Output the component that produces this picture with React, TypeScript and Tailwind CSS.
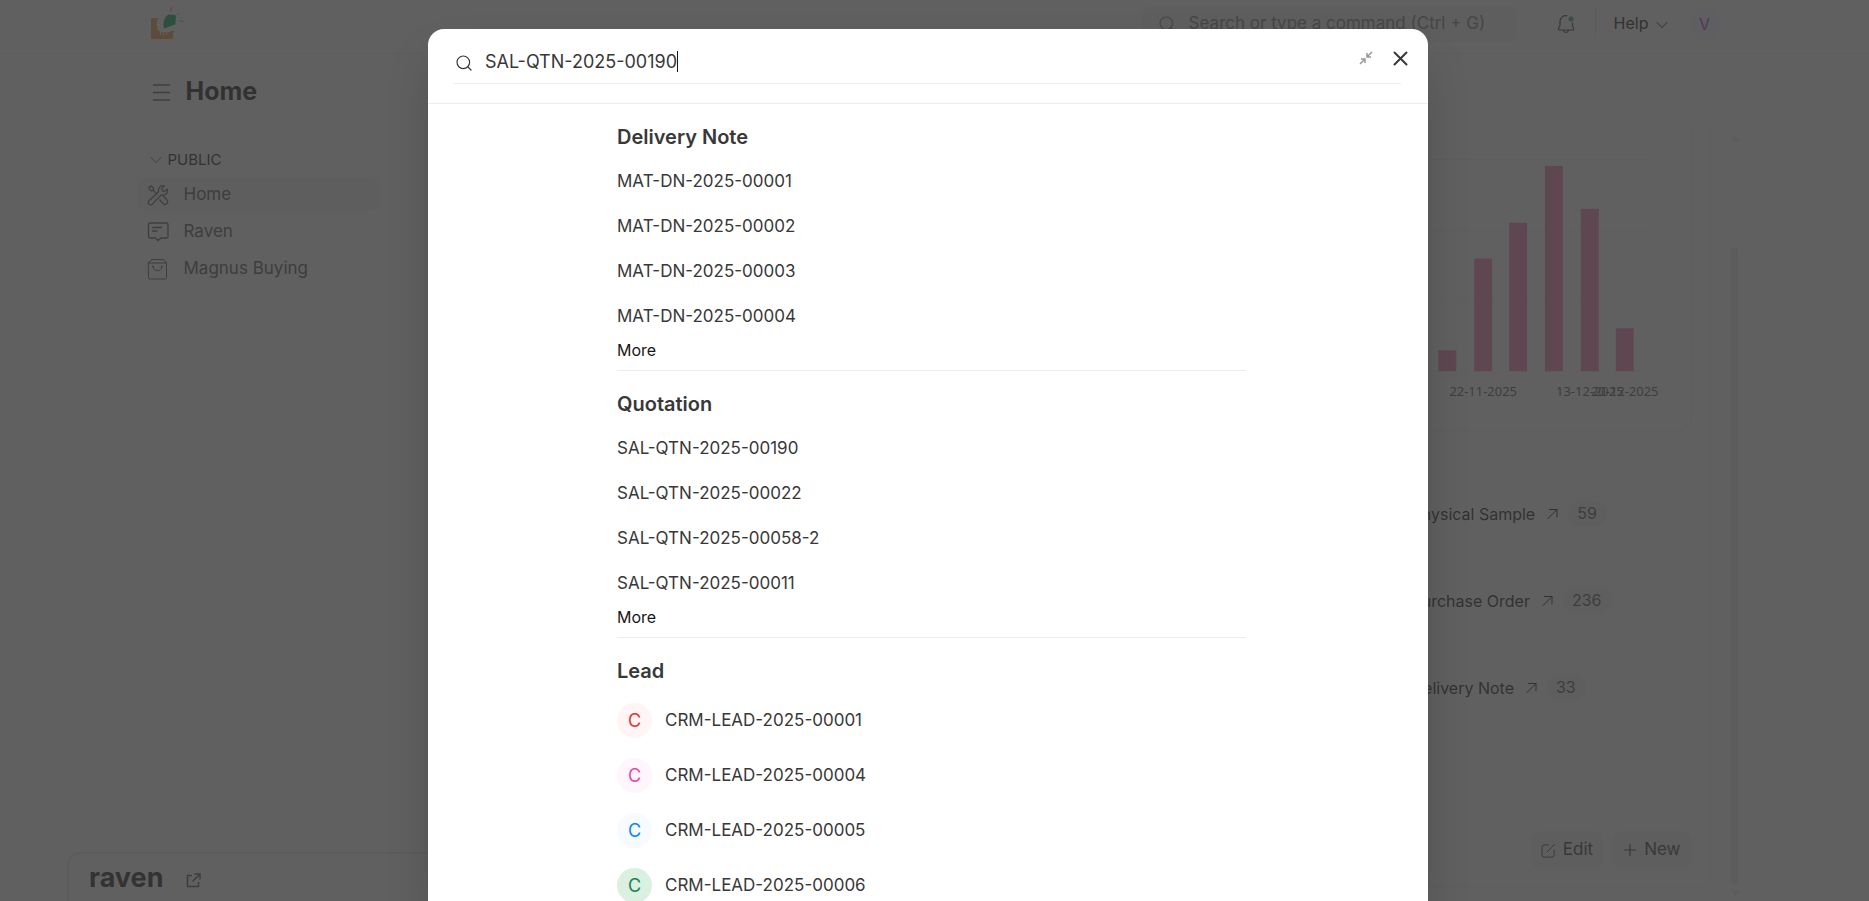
import type { ReactNode } from "react"

// === Sample Data ===
const sidebarItems = [
  { label: "Home", icon: "tool", active: true },
  { label: "Raven", icon: "message", active: false },
  { label: "Magnus Buying", icon: "bag", active: false },
]

const chartBars = [
  { x: 36, height: 21 },
  { x: 72, height: 113 },
  { x: 107, height: 149 },
  { x: 143, height: 206 },
  { x: 179, height: 163 },
  { x: 214, height: 43 },
]

const chartLabels = [
  { x: 72, text: "22-11-2025" },
  { x: 179, text: "13-12-2025" },
  { x: 214, text: "20-12-2025" },
]

const shortcuts = [
  { label: "Physical Sample", count: 59 },
  { label: "Purchase Order", count: 236 },
  { label: "Delivery Note", count: 33 },
]

const resultGroups = [
  {
    title: "Delivery Note",
    items: ["MAT-DN-2025-00001", "MAT-DN-2025-00002", "MAT-DN-2025-00003", "MAT-DN-2025-00004"],
  },
  {
    title: "Quotation",
    items: ["SAL-QTN-2025-00190", "SAL-QTN-2025-00022", "SAL-QTN-2025-00058-2", "SAL-QTN-2025-00011"],
  },
]

const leads = [
  { name: "CRM-LEAD-2025-00001", color: "bg-[#fff5f5] text-[#e03636]" },
  { name: "CRM-LEAD-2025-00004", color: "bg-[#fff5fc] text-[#e34aa6]" },
  { name: "CRM-LEAD-2025-00005", color: "bg-[#f7fbff] text-[#0289f7]" },
  { name: "CRM-LEAD-2025-00006", color: "bg-[#daf0e1] text-[#1f8053]" },
]

// === Icons ===
function Icon({ className, size = 16, children }: { className?: string; size?: number; children: ReactNode }) {
  return (
    <svg
      className={className}
      viewBox={`0 0 ${size} ${size}`}
      fill="none"
      stroke="currentColor"
      strokeLinecap="round"
      strokeLinejoin="round"
      aria-hidden="true"
    >
      {children}
    </svg>
  )
}

function SearchIcon({ className }: { className?: string }) {
  return (
    <Icon className={className}>
      <circle cx="7.3" cy="7.3" r="6.3" strokeWidth="1.2" />
      <path d="M11.8 11.8 15 15" strokeWidth="1.2" />
    </Icon>
  )
}

function ChevronIcon({ className }: { className?: string }) {
  return (
    <Icon className={className} size={12}>
      <path d="M1 3.5 6 8.5l5-5" />
    </Icon>
  )
}

function SidebarIcon({ name }: { name: string }) {
  if (name === "tool") {
    return (
      <Icon className="size-[22px]" size={22}>
        <path d="M1.8 3.8 4 2l2.200 1.600.3 2.200-1.200 1-2-.4ZM6 6.200l3.600 3.600" strokeWidth="1.2" />
        <path
          d="M11.600 7.800 2 16.800a2.300 2.300 0 0 0 3.300 3.300l8.900-9.300c2.700.7 5.300-.5 6.200-2.900.3-1 .2-2-.1-2.900l-2.700 2.500-2.300-.6-.5-2.300 2.500-2.700c-3.300-1-6.600 1.900-5.700 5.900Z"
          strokeWidth="1.2"
        />
        <path d="m16.200 12 3.700 3.900c2.200 2.600-1.200 6-3.600 3.900L12.800 16" strokeWidth="1.2" />
      </Icon>
    )
  }
  if (name === "message") {
    return (
      <Icon className="size-[22px]" size={22}>
        <path d="M3 2h16.500A1.500 1.500 0 0 1 21 3.500v12a1.500 1.500 0 0 1-1.500 1.500H14l-2.800 2.600L8.400 17H3a1.500 1.500 0 0 1-1.500-1.500v-12A1.500 1.500 0 0 1 3 2Z" strokeWidth="1.3" />
        <path d="M5.500 6.500h9M5.500 10H10" strokeWidth="1.3" />
      </Icon>
    )
  }
  return (
    <Icon className="size-[22px]" size={22}>
      <path d="M1.500 4.500 5 1.500h11l3.500 3v15a1.500 1.500 0 0 1-1.500 1.500H3a1.500 1.500 0 0 1-1.500-1.500ZM1.500 5h18" />
      <path d="M6 8.500c.4 5.800 8.600 5.800 9 0" />
      <circle cx="6" cy="8.500" r=".5" />
      <circle cx="15" cy="8.500" r=".5" />
    </Icon>
  )
}

function Logo() {
  return (
    <svg className="h-[34px] w-9" viewBox="0 0 36 34" aria-hidden="true">
      <path
        d="M1 12h8c-3 3-3 8-1 12l2 2v3h1v-3h2v4h1v-4h2v3h1v-3h2l2-1h4l-2 2v6H1Z"
        fill="#f0964b"
      />
      <path d="M18 8.500 25 9l1 1-.7 8.500L14 22.500c-1.500-5-.2-10.500 4-14Z" fill="#00a862" />
      <path d="m20 6 .4-4.500L21.900 1l-.6 4.500ZM26.500 8.200 29.800 7l-.3 1-2.500 1ZM28.500 15c2-1 4-.700 6 .6-2 .7-4 .7-6-.6Z" fill="#f0964b" />
    </svg>
  )
}

function ShortcutArrow() {
  return (
    <Icon className="size-3" size={12}>
      <path d="M2 10.500 11 1.500M3.500 1.500H11V9" />
    </Icon>
  )
}

// === Desk behind the dialog ===
function Navbar() {
  return (
    <header className="border-b border-[#ededed]">
      <div className="mx-auto flex h-[53px] w-full max-w-[1600px] items-start pl-[15px] pr-[14px]">
        <a href="#home" aria-label="Home" className="mt-[6px]">
          <Logo />
        </a>
        <div className="ml-auto mt-[6px] flex h-9 w-[375px] items-center gap-[14px] rounded-[10px] bg-[#f3f3f3] pl-[17px]">
          <SearchIcon className="size-4 shrink-0 text-[#7c7c7c]" />
          <input
            aria-label="Search"
            placeholder="Search or type a command (Ctrl + G)"
            className="w-full bg-transparent text-[17px] text-[#7c7c7c] placeholder:text-[#7c7c7c] outline-none"
          />
        </div>
        <button aria-label="Notifications" className="ml-[38px] mt-[13px]">
          <svg className="size-[22px] text-[#383838]" viewBox="0 0 22 22" fill="none" stroke="currentColor" strokeWidth="1.200" aria-hidden="true">
            <path d="M12.500 2.800C8 1.800 5 4.700 5 8.500v4L3.500 15.500a1 1 0 0 0 1 1.500h13a1 1 0 0 0 1-1.500L17.500 12.500V9.500M8.500 17.500c.5 2.600 4.500 2.600 5 0" />
            <circle cx="16" cy="6" r="2.500" fill="#30a66d" stroke="none" />
          </svg>
        </button>
        <span className="ml-[18px] mt-2 h-[30px] w-px bg-[#e2e2e2]" />
        <button className="ml-[18px] mt-[11px] flex items-center gap-[7px] text-base text-[#171717]">
          Help
          <ChevronIcon className="mt-1 size-3" />
        </button>
        <button className="ml-[21px] mt-2 size-8 rounded-full bg-[#faf5ff] text-base text-[#9c45e3]">V</button>
      </div>
    </header>
  )
}

function Sidebar() {
  return (
    <aside className="w-[243px] shrink-0 pt-4">
      <button className="flex h-7 items-center gap-[6px] pl-[13px] text-[15px] text-[#171717]">
        <ChevronIcon className="size-3 text-[#525252]" />
        PUBLIC
      </button>
      <nav className="mt-1 flex flex-col gap-1">
        {sidebarItems.map((item) => (
          <a
            key={item.label}
            href="#workspace"
            className={`flex h-[33px] items-center gap-[15px] rounded-[10px] pl-[10px] text-[17px] text-[#525252] ${
              item.active ? "bg-[#f3f3f3]" : ""
            }`}
          >
            <SidebarIcon name={item.icon} />
            {item.label}
          </a>
        ))}
      </nav>
    </aside>
  )
}

function Chart() {
  return (
    <div className="flex h-[301px] justify-end rounded-b-[14px] border-x border-b border-[#ededed] pr-[30px]">
      <svg className="h-full w-[250px]" viewBox="0 0 250 301" aria-label="Weekly orders">
        {[29, 100, 171, 242].map((y) => (
          <path key={y} d={`M0 ${y}.5H240`} stroke="#f0f0f0" />
        ))}
        {chartBars.map((bar) => (
          <g key={bar.x}>
            <rect x={bar.x - 9} y={242 - bar.height} width="18" height={bar.height} fill="#f683ae" />
            <path d={`M${bar.x}.5 242v7`} stroke="#f0f0f0" />
          </g>
        ))}
        {chartLabels.map((label) => (
          <text
            key={label.text}
            x={label.x}
            y="267"
            textAnchor="middle"
            className="fill-[#525252] font-['Noto_Sans',sans-serif] text-[13px]"
          >
            {label.text}
          </text>
        ))}
      </svg>
    </div>
  )
}

function Workspace() {
  return (
    <main className="mb-[14px] ml-[37px] flex min-w-0 flex-1 flex-col rounded-b-[14px] border-x border-b border-[#ededed] px-[18px] pb-[17px]">
      <Chart />
      <ul className="ml-auto mt-[39px] w-[280px]">
        {shortcuts.map((item) => (
          <li key={item.label} className="flex h-[87px] items-center">
            <a href="#list" className="flex items-center gap-[11px] text-base text-[#171717]">
              {item.label}
              <ShortcutArrow />
            </a>
            <span className="ml-[9px] rounded-full bg-[#f3f3f3] px-[10px] text-base leading-[25px] text-[#525252]">
              {item.count}
            </span>
          </li>
        ))}
      </ul>
      <div className="mt-auto flex justify-end gap-[9px] text-[17px] text-[#383838]">
        <button className="flex h-[38px] items-center gap-[7px] rounded-[10px] bg-[#f3f3f3] px-[10px]">
          <Icon className="size-[15px]">
            <path d="M8 2H3.500A2.500 2.500 0 0 0 1 4.500v8A2.500 2.500 0 0 0 3.500 15h8a2.500 2.500 0 0 0 2.500-2.500V8M6.500 9.500 14.500 1.500" />
          </Icon>
          Edit
        </button>
        <button className="flex h-[38px] items-center gap-[7px] rounded-[10px] bg-[#f3f3f3] px-[11px]">
          <Icon className="size-[14px]" size={14}>
            <path d="M7 1.500v11M1.500 7h11" strokeWidth="1.200" />
          </Icon>
          New
        </button>
      </div>
    </main>
  )
}

function ScrollTrack() {
  return (
    <div className="-mr-1 ml-5 flex w-2 flex-col items-center pb-1 pt-1" aria-hidden="true">
      <svg className="w-2" viewBox="0 0 8 7">
        <path d="M4 0 8 7H0Z" fill="#ebebeb" />
      </svg>
      <span className="mb-[6px] mt-[106px] w-[7px] flex-1 rounded-full bg-[#ebebeb]" />
      <svg className="w-2" viewBox="0 0 8 7">
        <path d="M4 7 8 0H0Z" fill="#ebebeb" />
      </svg>
    </div>
  )
}

function RavenBar() {
  return (
    <div className="absolute bottom-0 left-[67px] flex h-[49px] w-2/3 items-center rounded-t-[14px] border-2 border-b-0 border-[#e8e8e8] bg-white pl-5">
      <span className="text-[27px] leading-8 font-bold text-[#202020]">raven</span>
      <a href="#raven" aria-label="Open Raven" className="ml-[23px] mt-[6px] text-[#525252]">
        <svg className="size-[15px]" viewBox="0 0 15 15" fill="none" stroke="currentColor" strokeWidth="1.500" aria-hidden="true">
          <path d="M6 2.500H1.500v11h11V9M8.500 1H14v5.500M14 1 6.500 8.500" />
        </svg>
      </a>
    </div>
  )
}

// === Search dialog ===
function SearchDialog() {
  return (
    <div
      role="dialog"
      aria-label="Search"
      className="flex w-full max-w-[1000px] flex-col overflow-hidden rounded-t-2xl bg-white text-[#383838] shadow-2xl"
    >
      <div className="flex border-b border-[#ededed] pb-[19px] pl-[26px] pr-[20px] pt-[10px]">
        <div className="flex h-[45px] flex-1 items-center border-b border-[#ededed] pl-[2px]">
          <SearchIcon className="mt-1 size-4" />
          <input
            aria-label="Search documents"
            defaultValue="SAL-QTN-2025-00190"
            className="field-sizing-content ml-[13px] bg-transparent text-[18px] outline-none"
          />
          <span className="h-[21px] w-px bg-[#171717]" />
          <button aria-label="Minimize" className="mb-[6px] ml-auto mr-7 text-[#999999]">
            <svg className="size-[14px]" viewBox="0 0 14 14" fill="none" stroke="currentColor" strokeWidth="1.500" aria-hidden="true">
              <path d="M1 13 5.800 8.200M2 8h4v4M13 1 8.200 5.800M8 2v4h4" />
            </svg>
          </button>
        </div>
        <button aria-label="Close" className="-ml-2 mb-[7px]">
          <svg className="size-[15px]" viewBox="0 0 15 15" fill="none" stroke="currentColor" strokeWidth="2" strokeLinecap="round" aria-hidden="true">
            <path d="m1.500 1.500 12 12M13.500 1.500l-12 12" />
          </svg>
        </button>
      </div>

      <div className="pl-[7px]">
        <div className="mx-auto w-full max-w-[629px]">
          {resultGroups.map((group) => (
            <section key={group.title} className="h-[267px] border-b border-[#ededed] pt-[18px]">
              <h2 className="text-[20px] leading-[30px] font-semibold">{group.title}</h2>
              <ul className="pt-[7px]">
                {group.items.map((item) => (
                  <li key={item} className="flex h-[45px] items-center text-[17px]">
                    <a href="#result">{item}</a>
                  </li>
                ))}
              </ul>
              <button className="block text-base leading-[22px] text-[#171717]">More</button>
            </section>
          ))}
          <section className="pt-[18px]">
            <h2 className="text-[20px] leading-[30px] font-semibold">Lead</h2>
            <ul className="pt-[7px]">
              {leads.map((lead) => (
                <li key={lead.name} className="flex h-[55px] items-center gap-[13px] text-[17px]">
                  <span className={`flex size-[35px] items-center justify-center rounded-full text-[18px] ${lead.color}`}>
                    C
                  </span>
                  <a href="#result">{lead.name}</a>
                </li>
              ))}
            </ul>
          </section>
        </div>
      </div>
    </div>
  )
}

export default function App() {
  return (
    <div className="relative flex h-screen flex-col overflow-hidden bg-white font-['Inter',sans-serif]">
      <Navbar />
      <div className="mx-auto flex min-h-0 w-full max-w-[1600px] flex-1 flex-col">
        <div className="flex h-[76px] items-center gap-[15px] pl-[17px]">
          <button aria-label="Toggle sidebar" className="text-[#525252]">
            <Icon className="size-[19px]" size={19}>
              <path d="M1.500 2h16M1.500 9.500h16M1.500 17h16" strokeWidth="1.500" />
            </Icon>
          </button>
          <h1 className="text-[25px] font-bold text-[#171717]">Home</h1>
        </div>
        <div className="flex min-h-0 flex-1 pl-[2px]">
          <Sidebar />
          <Workspace />
          <ScrollTrack />
        </div>
      </div>
      <RavenBar />

      {/* dimmed layer with the dialog on top */}
      <div className="absolute inset-0 flex items-start justify-center overflow-hidden bg-[#383838]/80 pr-[13px] pt-[29px]">
        <SearchDialog />
      </div>
    </div>
  )
}
